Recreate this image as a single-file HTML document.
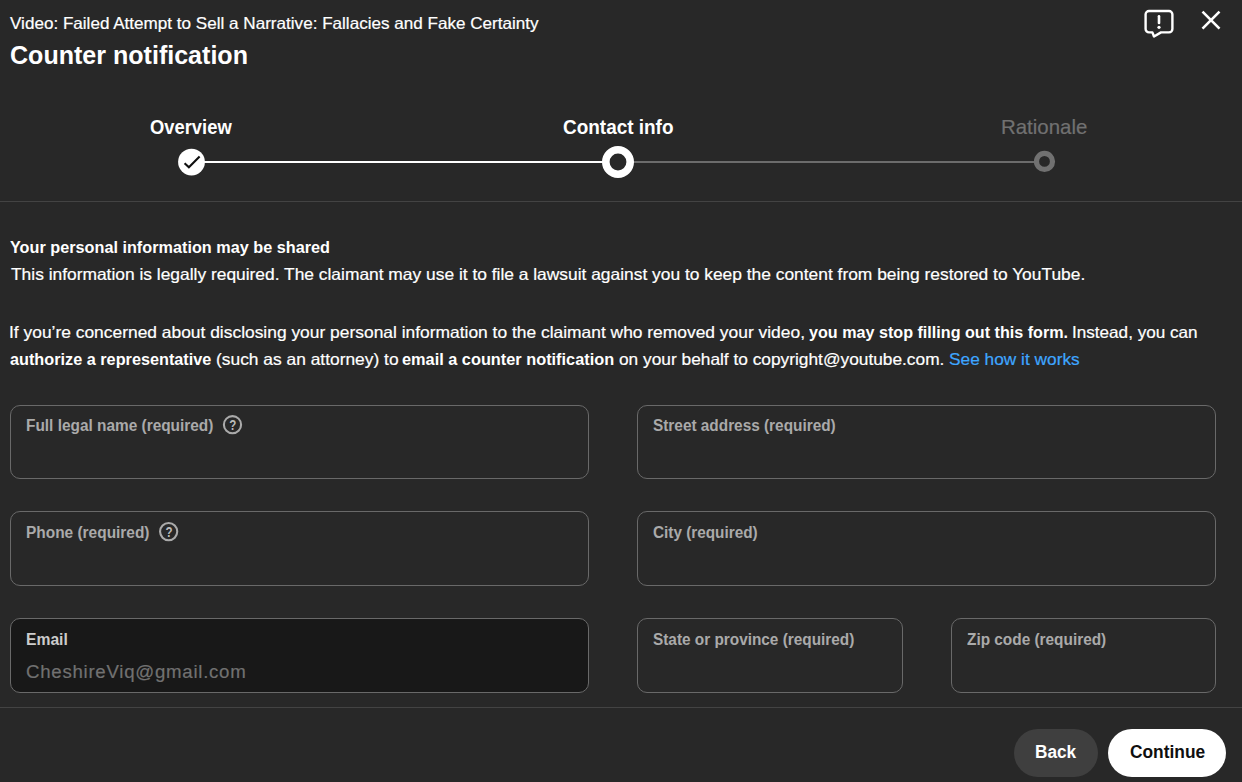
<!DOCTYPE html>
<html lang="en"><head><meta charset="utf-8"><title>Counter notification</title>
<style>
html,body{margin:0;padding:0;}
body{width:1242px;height:782px;overflow:hidden;background:#282828;position:relative;font-family:"Liberation Sans",sans-serif;}
h1,p,ol,li,form,header,nav,section,footer{margin:0;padding:0;font:inherit;list-style:none;display:block;}
.t{position:absolute;display:inline-block;white-space:nowrap;line-height:1;transform-origin:0 0;text-decoration:none;}
.a{position:absolute;}
.f{position:absolute;box-sizing:border-box;border:1px solid #696969;border-radius:10px;}
.hr{position:absolute;left:0;width:1242px;height:1px;background:#434343;border:0;margin:0;}
.btn{position:absolute;height:48px;border-radius:24px;top:729px;border:0;padding:0;margin:0;font:inherit;cursor:pointer;}
.bar{position:absolute;top:161px;width:427px;height:2px;}
</style></head><body>
<header>
<p id="t1" class="t" style="left:10.33px;top:15.13px;font-size:16.5px;font-weight:400;color:#ffffff;-webkit-text-stroke:0.2px #ffffff;transform:scaleX(1.0355)">Video: Failed Attempt to Sell a Narrative: Fallacies and Fake Certainty</p>
<h1 id="t2" class="t" style="left:10.07px;top:41.65px;font-size:26.4px;font-weight:700;color:#ffffff;transform:scaleX(0.9492)">Counter notification</h1>
<svg class="a" style="left:1142px;top:7px" width="34" height="34" viewBox="0 0 34 34" fill="none" stroke="#ffffff" stroke-width="2.4" stroke-linejoin="round" stroke-linecap="round" role="img" aria-label="Send feedback"><path d="M7 4h20a3.4 3.4 0 0 1 3.4 3.4v14.6a3.4 3.4 0 0 1 -3.4 3.4H19L12 29.5L10.4 25.4H7a3.4 3.4 0 0 1 -3.4 -3.4v-14.6a3.4 3.4 0 0 1 3.4 -3.4z"/><path d="M17 9.2v6.7" stroke-width="2.6"/><circle cx="17" cy="20.3" r="1.6" fill="#ffffff" stroke="none"/></svg>
<svg class="a" style="left:1199px;top:8px" width="24" height="24" viewBox="0 0 24 24" fill="none" stroke="#ffffff" stroke-width="2.6" role="img" aria-label="Close"><path d="M3.5 3.6l17 17M20.500 3.600l-17 17"/></svg>
</header>
<nav aria-label="Progress">
<div class="bar" style="left:191px;background:#ffffff"></div>
<div class="bar" style="left:618px;background:#6c6c6c"></div>
<ol>
<li><span id="s1" class="t" style="left:149.93px;top:117.07px;font-size:20px;font-weight:700;color:#ffffff;transform:scaleX(0.9183)">Overview</span><svg class="a" style="left:176px;top:146px" width="32" height="32" viewBox="0 0 32 32"><circle cx="15.5" cy="16.1" r="13.4" fill="#ffffff"/><path d="M8.6 17.2L12.9 21.3L23.6 10.6" fill="none" stroke="#0f0f0f" stroke-width="2.1"/></svg></li>
<li><span id="s2" class="t" style="left:563.05px;top:117.07px;font-size:20px;font-weight:700;color:#ffffff;transform:scaleX(0.9473)">Contact info</span><svg class="a" style="left:600px;top:144px" width="36" height="36" viewBox="0 0 36 36"><circle cx="18" cy="18" r="12.2" fill="#282828" stroke="#ffffff" stroke-width="7.6"/></svg></li>
<li><span id="s3" class="t" style="left:1001.47px;top:118.24px;font-size:19.8px;font-weight:400;color:#717171;-webkit-text-stroke:0.2px #717171;transform:scaleX(1.0327)">Rationale</span><svg class="a" style="left:1030px;top:148px" width="28" height="28" viewBox="0 0 28 28"><circle cx="14.5" cy="13.4" r="8" fill="#282828" stroke="#717171" stroke-width="5.2"/></svg></li>
</ol>
</nav>
<div class="hr" style="top:201px"></div>
<section>
<p><strong id="b1" class="t" style="left:9.77px;top:239.13px;font-size:16.5px;font-weight:700;color:#ffffff;transform:scaleX(0.9838)">Your personal information may be shared</strong></p>
<p><span id="b2" class="t" style="left:10.88px;top:265.93px;font-size:16.5px;font-weight:400;color:#ffffff;-webkit-text-stroke:0.2px #ffffff;transform:scaleX(1.0533)">This information is legally required. The claimant may use it to file a lawsuit against you to keep the content from being restored to YouTube.</span></p>
<p><span id="b3a" class="t" style="left:8.95px;top:324.23px;font-size:16.5px;font-weight:400;color:#ffffff;-webkit-text-stroke:0.2px #ffffff;transform:scaleX(1.0545)">If you’re concerned about disclosing your personal information to the claimant who removed your video,</span> <strong id="b3b" class="t" style="left:808.96px;top:324.23px;font-size:16.5px;font-weight:700;color:#ffffff;transform:scaleX(0.9779)">you may stop filling out this form.</strong> <span id="b3c" class="t" style="left:1072.40px;top:324.23px;font-size:16.5px;font-weight:400;color:#ffffff;-webkit-text-stroke:0.2px #ffffff;transform:scaleX(1.0372)">Instead, you can</span></p>
<p><strong id="b4a" class="t" style="left:10.24px;top:350.63px;font-size:16.5px;font-weight:700;color:#ffffff;transform:scaleX(0.9846)">authorize a representative</strong> <span id="b4b" class="t" style="left:215.59px;top:350.63px;font-size:16.5px;font-weight:400;color:#ffffff;-webkit-text-stroke:0.2px #ffffff;transform:scaleX(1.0532)">(such as an attorney) to</span> <strong id="b4c" class="t" style="left:401.75px;top:350.63px;font-size:16.5px;font-weight:700;color:#ffffff;transform:scaleX(0.9888)">email a counter notification</strong> <span id="b4d" class="t" style="left:618.54px;top:350.63px;font-size:16.5px;font-weight:400;color:#ffffff;-webkit-text-stroke:0.2px #ffffff;transform:scaleX(1.0487)">on your behalf to copyright@youtube.com.</span> <a id="b4e" class="t" href="#" style="left:948.57px;top:350.63px;font-size:16.5px;font-weight:400;color:#3ea6ff;-webkit-text-stroke:0.2px #3ea6ff;transform:scaleX(1.0478)">See how it works</a></p>
</section>
<form>
<div id="f1" class="f" style="left:10px;top:405px;width:579px;height:74px"><label id="l1" class="t" style="left:14.68px;top:12.46px;font-size:16px;font-weight:700;color:#aaaaaa;transform:scaleX(0.9625)">Full legal name (required)</label><svg class="a help" style="left:209px;top:6px" width="25" height="25" viewBox="0 0 25 25" role="img" aria-label="Help"><circle cx="12.50" cy="12.70" r="8.6" fill="none" stroke="#aaaaaa" stroke-width="2.1"/><text transform="translate(12.90 17.70) scale(0.84 1)" text-anchor="middle" font-family="Liberation Sans, sans-serif" font-weight="700" font-size="13.8" fill="#bbbbbb">?</text></svg></div>
<div id="f4" class="f" style="left:637px;top:405px;width:579px;height:74px"><label id="l4" class="t" style="left:14.64px;top:12.46px;font-size:16px;font-weight:700;color:#aaaaaa;transform:scaleX(0.9602)">Street address (required)</label></div>
<div id="f2" class="f" style="left:10px;top:511px;width:579px;height:75px"><label id="l2" class="t" style="left:14.68px;top:13.06px;font-size:16px;font-weight:700;color:#aaaaaa;transform:scaleX(0.9649)">Phone (required)</label><svg class="a help" style="left:145px;top:7px" width="25" height="25" viewBox="0 0 25 25" role="img" aria-label="Help"><circle cx="12.65" cy="12.60" r="8.6" fill="none" stroke="#aaaaaa" stroke-width="2.1"/><text transform="translate(13.05 17.60) scale(0.84 1)" text-anchor="middle" font-family="Liberation Sans, sans-serif" font-weight="700" font-size="13.8" fill="#bbbbbb">?</text></svg></div>
<div id="f5" class="f" style="left:637px;top:511px;width:579px;height:75px"><label id="l5" class="t" style="left:14.92px;top:13.06px;font-size:16px;font-weight:700;color:#aaaaaa;transform:scaleX(0.9570)">City (required)</label></div>
<div id="f3" class="f" style="left:10px;top:618px;width:579px;height:75px;background:#181818"><label id="l3" class="t" style="left:14.64px;top:13.36px;font-size:16px;font-weight:700;color:#cccccc;transform:scaleX(0.9791)">Email</label> <span id="l3v" class="t" style="left:14.80px;top:44.36px;font-size:18px;font-weight:400;color:#717171;letter-spacing:0.7px;-webkit-text-stroke:0.2px #717171;transform:scaleX(1.0364)">CheshireViq@gmail.com</span></div>
<div id="f6" class="f" style="left:637px;top:618px;width:266px;height:75px"><label id="l6" class="t" style="left:14.64px;top:13.36px;font-size:16px;font-weight:700;color:#aaaaaa;transform:scaleX(0.9595)">State or province (required)</label></div>
<div id="f7" class="f" style="left:951px;top:618px;width:265px;height:75px"><label id="l7" class="t" style="left:14.79px;top:13.36px;font-size:16px;font-weight:700;color:#aaaaaa;transform:scaleX(0.9607)">Zip code (required)</label></div>
</form>
<div class="hr" style="top:707px"></div>
<footer>
<button type="button" class="btn" style="left:1014px;width:84px;background:#3f3f3f"><span id="bt1" class="t" style="left:20.72px;top:14.26px;font-size:18px;font-weight:700;color:#ffffff;transform:scaleX(0.9575)">Back</span></button>
<button type="button" class="btn" style="left:1108px;width:118px;background:#ffffff"><span id="bt2" class="t" style="left:22.42px;top:14.26px;font-size:18px;font-weight:700;color:#0f0f0f;transform:scaleX(0.9634)">Continue</span></button>
</footer>
</body></html>
